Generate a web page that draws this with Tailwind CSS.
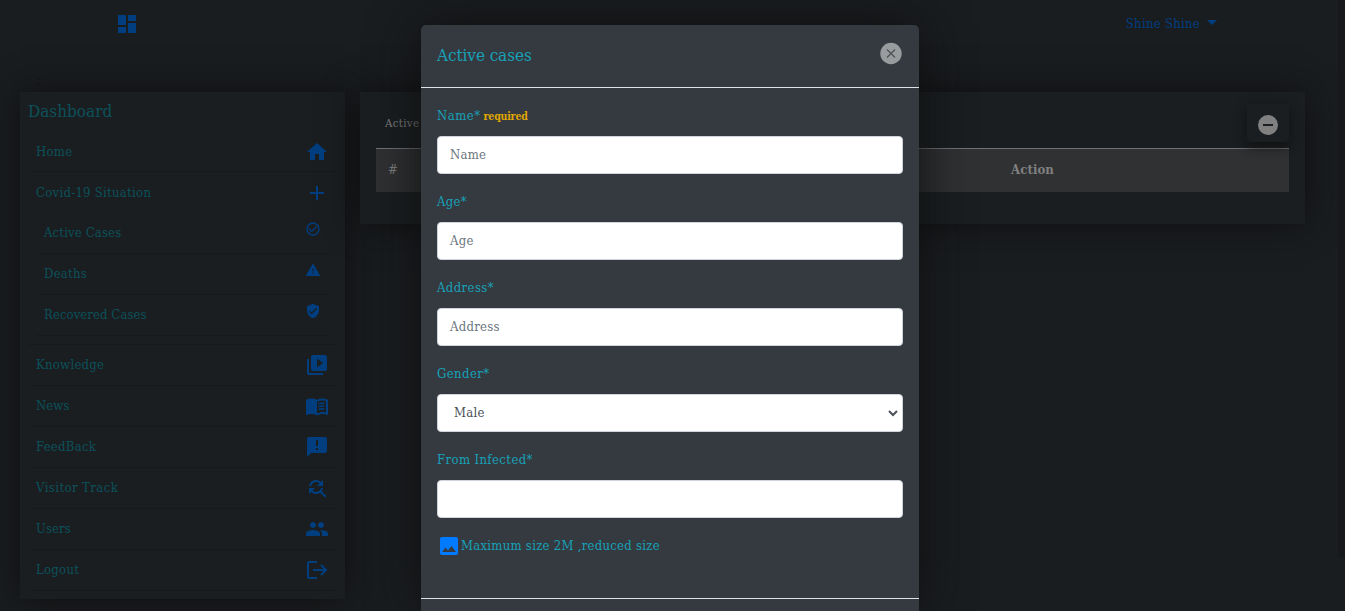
<!DOCTYPE html>
<html lang="en">
<head>
<meta charset="utf-8">
<title>Dashboard</title>
<script src="https://cdn.jsdelivr.net/npm/@tailwindcss/browser@4"></script>
</head>
<body class="relative h-[611px] w-[1345px] overflow-hidden bg-[#1a1d20] font-['DejaVu_Serif_Condensed','DejaVu_Serif',serif] text-[13px] leading-6 tracking-[0.27px] text-[#0c515c]">
<header class="flex h-[53px] items-start justify-between border-b border-[#191c1f] pt-3 pl-[115px] pr-[128px] text-[#003e80]">
  <svg class="size-6" viewBox="0 0 24 24" fill="currentColor"><path d="M3 13h8V3H3v10zm0 8h8v-6H3v6zm10 0h8V11h-8v10zm0-18v6h8V3h-8z"/></svg>
  <div class="flex items-center gap-[7px]"><span>Shine Shine</span><span class="mb-1 border-x-[5px] border-t-[5px] border-x-transparent"></span></div>
</header>
<div class="h-[39px] pt-[15px] pl-9 text-[#121416]">;</div>
<div class="flex items-start gap-[15px] pl-5">
  <nav class="h-[507px] w-[325px] bg-[#1a1e20] px-2 pt-[7px] shadow-[0_0_32px_#0e0e0f]">
    <h1 class="h-8 text-[17px] leading-6 tracking-normal">Dashboard</h1>
    <div class="flex h-[41px] items-start justify-between border-b border-[#171a1c] px-2 pt-[9px]"><span>Home</span><svg class="size-6 text-[#003e80]" viewBox="0 0 24 24" fill="currentColor"><path d="M10 20v-6h4v6h5v-8h3L12 3 2 12h3v8z"/></svg></div>
    <div class="flex h-10 items-start justify-between px-2 pt-[9px]"><span>Covid-19 Situation</span><svg class="size-6 text-[#003e80]" viewBox="0 0 24 24" fill="currentColor"><path d="M19 13h-6v6h-2v-6H5v-2h6V5h2v6h6v2z"/></svg></div>
    <div class="h-[133px] border-b border-[#171a1c] px-2 pt-px">
      <div class="flex h-[41px] items-start justify-between border-b border-[#171a1c] px-2 pt-2"><span class="tracking-[0.15px]">Active Cases</span><svg class="size-4 text-[#003e80]" viewBox="0 0 24 24" fill="currentColor"><path d="M16.59 7.58 10 14.17l-3.59-3.58L5 12l5 5 8-8zM12 2a10 10 0 1 0 0 20 10 10 0 0 0 0-20zm0 18a8 8 0 1 1 0-16 8 8 0 0 1 0 16z"/></svg></div>
      <div class="flex h-[41px] items-start justify-between border-b border-[#171a1c] px-2 pt-2"><span>Deaths</span><svg class="size-4 text-[#003e80]" viewBox="0 0 24 24" fill="currentColor"><path d="M1 21h22L12 2 1 21zm12-3h-2v-2h2v2zm0-4h-2v-4h2v4z"/></svg></div>
      <div class="flex h-[41px] items-start justify-between border-b border-[#171a1c] px-2 pt-2"><span class="tracking-[0.08px]">Recovered Cases</span><svg class="size-4 text-[#003e80]" viewBox="0 0 24 24" fill="currentColor"><path d="M12 1 3 5v6c0 5.55 3.84 10.74 9 12 5.16-1.26 9-6.45 9-12V5l-9-4zm-2 16-4-4 1.41-1.41L10 14.17l6.59-6.59L18 9l-8 8z"/></svg></div>
    </div>
    <div class="flex h-[41px] items-start justify-between border-b border-[#171a1c] px-2 pt-2"><span>Knowledge</span><svg class="size-6 text-[#003e80]" viewBox="0 0 24 24" fill="currentColor"><path d="M4 6H2v14c0 1.1.9 2 2 2h14v-2H4V6zm16-4H8c-1.100 0-2 .9-2 2v12c0 1.100.9 2 2 2h12c1.100 0 2-.9 2-2V4c0-1.100-.9-2-2-2zm-8 12.500v-9l6 4.500-6 4.500z"/></svg></div>
    <div class="flex h-[41px] items-start justify-between border-b border-[#171a1c] px-2 pt-2"><span class="tracking-normal">News</span><svg class="size-6 text-[#003e80]" viewBox="0 0 24 24" fill="currentColor"><path fill-rule="evenodd" d="M21 5c-1.110-.35-2.330-.5-3.500-.5-1.950 0-4.050.4-5.500 1.500-1.450-1.100-3.550-1.500-5.500-1.500S2.450 4.900 1 6v14.650c.2.300.45.400.75.250C3.100 20.450 5.050 20 6.500 20c1.950 0 4.050.4 5.500 1.500 1.350-.85 3.800-1.500 5.500-1.500 1.650 0 3.350.3 4.750 1.050.3.150.75-.1.750-.4V6c-.6-.45-1.250-.75-2-1zm0 13.500c-1.100-.35-2.300-.5-3.500-.5-1.700 0-4.150.65-5.500 1.500V8c1.350-.85 3.800-1.500 5.500-1.500 1.200 0 2.400.15 3.500.5v11.500z"/><path d="M13.500 9.300c2-.8 4-.9 6-.5v1.500c-2-.4-4-.2-6 .5zm0 2.700c2-.8 4-.9 6-.5V13c-2-.4-4-.2-6 .5zm0 2.700c2-.8 4-.9 6-.5v1.500c-2-.4-4-.2-6 .5z"/></svg></div>
    <div class="flex h-[41px] items-start justify-between border-b border-[#171a1c] px-2 pt-2"><span>FeedBack</span><svg class="size-6 text-[#003e80]" viewBox="0 0 24 24" fill="currentColor"><path d="M20 2H4c-1.100 0-1.990.9-1.990 2L2 22l4-4h14c1.100 0 2-.9 2-2V4c0-1.100-.9-2-2-2zm-7 13h-2v-2h2v2zm0-4h-2V5h2v6z"/></svg></div>
    <div class="flex h-[41px] items-start justify-between border-b border-[#171a1c] px-2 pt-2"><span class="tracking-[0.42px]">Visitor Track</span><svg class="size-6 text-[#003e80]" viewBox="0 0 24 24" fill="currentColor"><path d="M11 6c1.380 0 2.630.56 3.540 1.460L12 10h6V4l-2.050 2.050C14.680 4.780 12.930 4 11 4c-3.530 0-6.430 2.610-6.920 6H6.100c.46-2.280 2.480-4 4.900-4zm5.640 9.140c.66-.9 1.120-1.970 1.280-3.140H15.900c-.46 2.280-2.480 4-4.900 4-1.380 0-2.630-.56-3.540-1.460L10 12H4v6l2.050-2.050C7.320 17.220 9.070 18 11 18c1.550 0 2.980-.51 4.140-1.360L20 21.490 21.490 20l-4.850-4.860z"/></svg></div>
    <div class="flex h-[41px] items-start justify-between border-b border-[#171a1c] px-2 pt-2"><span class="tracking-[0.1px]">Users</span><svg class="size-6 text-[#003e80]" viewBox="0 0 24 24" fill="currentColor"><path d="M16 11c1.660 0 2.990-1.340 2.990-3S17.660 5 16 5s-3 1.340-3 3 1.340 3 3 3zm-8 0c1.660 0 2.990-1.340 2.990-3S9.660 5 8 5 5 6.340 5 8s1.340 3 3 3zm0 2c-2.330 0-7 1.170-7 3.500V19h14v-2.500c0-2.330-4.670-3.500-7-3.500zm8 0c-.29 0-.62.020-.97.050 1.160.84 1.970 1.970 1.970 3.450V19h6v-2.500c0-2.330-4.670-3.500-7-3.500z"/></svg></div>
    <div class="flex h-[41px] items-start justify-between border-b border-[#171a1c] px-2 pt-2"><span>Logout</span><svg class="size-6 text-[#003e80]" viewBox="0 0 24 24" fill="none" stroke="currentColor" stroke-width="2"><path d="M12 4H4q-1 0-1 1v14q0 1 1 1h8M8 12h13M16 7l5 5-5 5"/></svg></div>
  </nav>
  <main class="h-[132px] w-[945px] bg-[#1a1e20] px-4 shadow-[0_0_32px_#0e0e0f]">
    <div class="flex h-14 items-start justify-between pt-3">
      <span class="pt-[7px] pl-[9px] text-[11.5px] text-[#808080]">Active</span>
      <span class="flex h-[38px] w-[42px] items-center justify-center rounded bg-[#1a1e20] pt-1 shadow-[0_4px_12px_#111]"><svg class="size-6 text-[#808080]" viewBox="0 0 24 24" fill="currentColor"><path d="M12 2a10 10 0 1 0 0 20 10 10 0 0 0 0-20zm5 11H7v-2h10v2z"/></svg></span>
    </div>
    <div class="flex h-11 items-start border-t border-[#707274] bg-[#303133] pt-[9px] text-[#808080]"><span class="w-[635px] pl-3">#</span><span class="font-bold tracking-[0.1px]">Action</span></div>
  </main>
</div>
<div class="absolute top-0 right-0 h-[558px] w-[7px] bg-[#17181b]"></div>
<section class="absolute top-[25px] left-[421px] h-[586px] w-[498px] rounded-t-[5px] bg-[#353940] text-[#17a2b8] shadow-[0_0_50px_#0e0e0f]">
  <div class="flex h-[63px] items-start justify-between border-b border-[#dee2e6] px-4 pt-[17px]"><h2 class="mt-px text-[17px] tracking-[-0.08px]">Active cases</h2>
    <svg class="-mt-px size-6" viewBox="0 0 24 24"><circle cx="12" cy="12.500" r="10.700" fill="#999c9f"/><path d="M8 8.500l8 8M16 8.500l-8 8" stroke="#4a4e52" stroke-width="1.100"/></svg></div>
  <div class="flex h-[511px] flex-col border-b border-[#dee2e6] px-4 pt-4">
    <div class="h-8 tracking-[0.5px]">Name*<span class="pl-[3px] text-[10.500px] font-bold tracking-[-0.2px] text-[#e0a800]">required</span></div>
    <div class="mb-[16px] h-[38px] shrink-0 rounded border border-[#ced4da] bg-white px-3 pt-[6px] text-[#6c757d]">Name</div>
    <div class="h-8">Age*</div>
    <div class="mb-[16px] h-[38px] shrink-0 rounded border border-[#ced4da] bg-white px-3 pt-[6px] text-[#6c757d]">Age</div>
    <div class="h-8 tracking-[0.4px]">Address*</div>
    <div class="mb-[16px] h-[38px] shrink-0 rounded border border-[#ced4da] bg-white px-3 pt-[6px] text-[#6c757d]">Address</div>
    <div class="h-8 tracking-[0.4px]">Gender*</div>
    <div class="mb-[16px] flex h-[38px] shrink-0 items-start justify-between rounded border border-[#ced4da] bg-white pt-[6px] pr-[3px] pl-4 text-[#495057]"><span>Male</span><svg class="mt-[7px] h-[10px] w-3" viewBox="0 0 12 10" fill="none" stroke="#495057" stroke-width="2"><path d="M2 3l4 4 4-4"/></svg></div>
    <div class="h-8 tracking-[0.38px]">From Infected*</div>
    <div class="mb-[16px] h-[38px] shrink-0 rounded border border-[#ced4da] bg-white"></div>
    <div class="flex items-center"><svg class="size-6 text-[#007bff]" viewBox="0 0 24 24" fill="currentColor"><path d="M21 19V5c0-1.100-.9-2-2-2H5c-1.100 0-2 .9-2 2v14c0 1.100.9 2 2 2h14c1.100 0 2-.9 2-2zM8.500 13.500l2.500 3.010L14.500 12l4.500 6H5l3.500-4.500z"/></svg><span>Maximum size 2M ,reduced size</span></div>
  </div>
</section>
</body>
</html>
